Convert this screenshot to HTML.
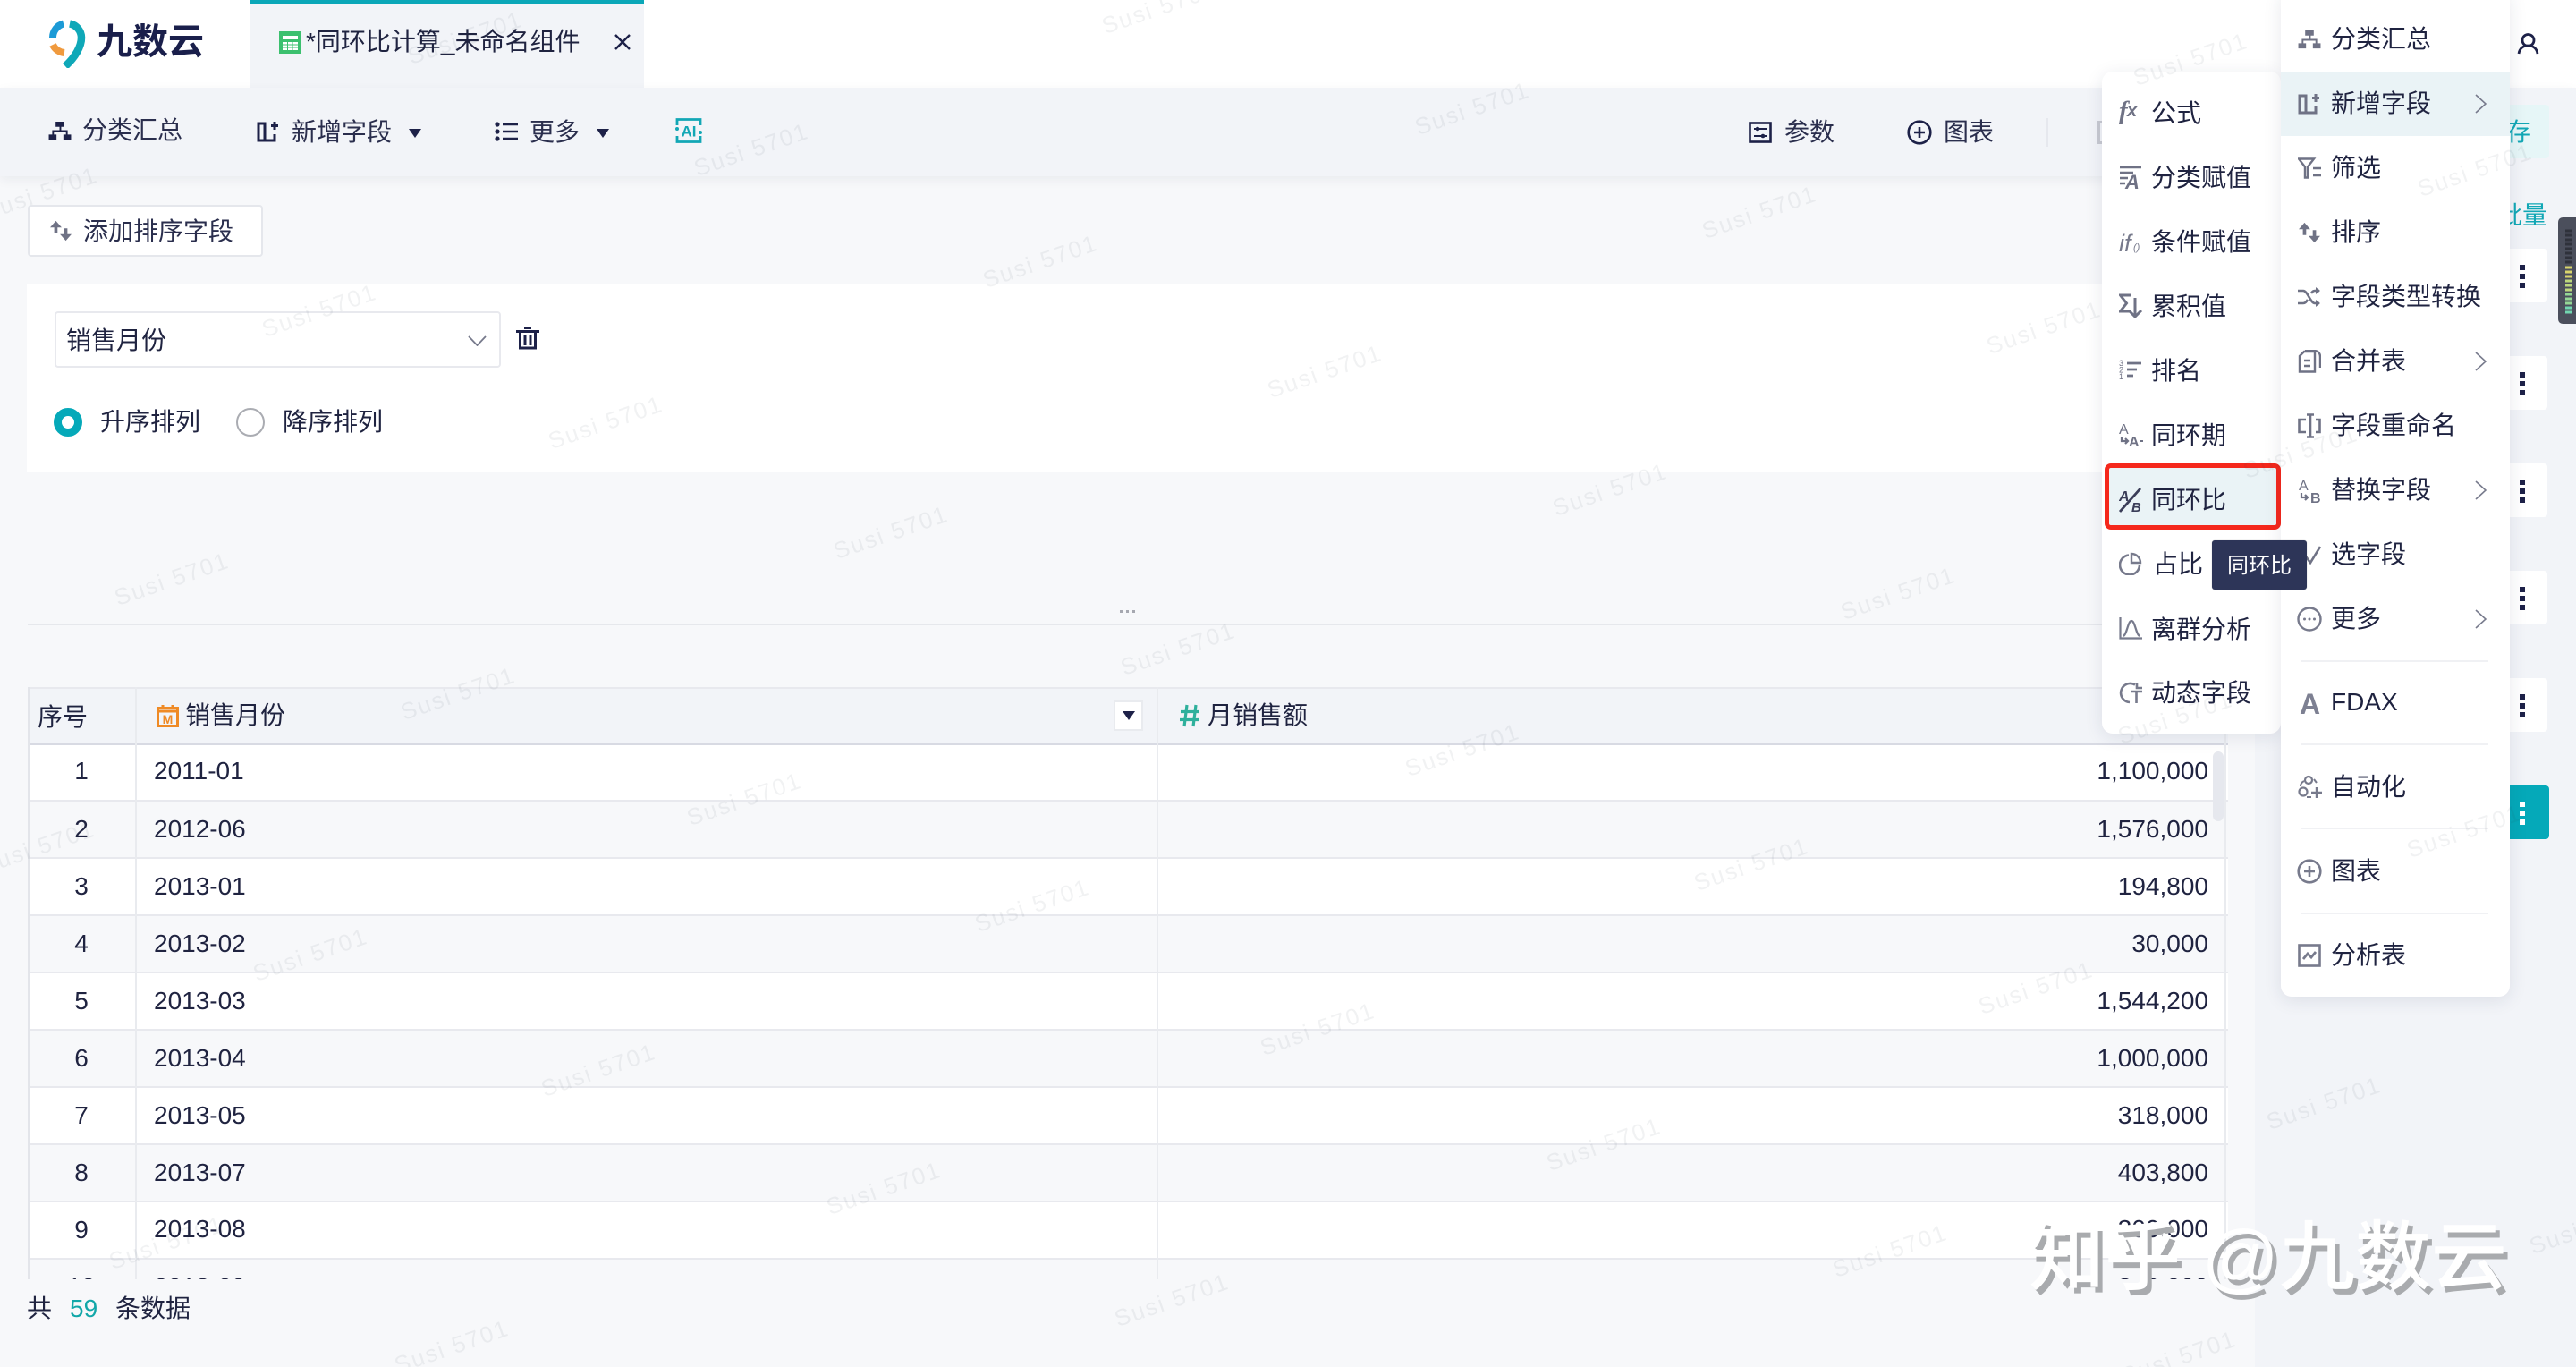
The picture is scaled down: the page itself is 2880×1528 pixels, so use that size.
<!DOCTYPE html>
<html lang="zh">
<head>
<meta charset="utf-8">
<title>九数云</title>
<style>
html,body{margin:0;padding:0;background:#f7f8fa}
#p{position:relative;width:2880px;height:1528px;overflow:hidden;background:#f7f8fa;font-family:"Liberation Sans","Noto Sans CJK SC",sans-serif;font-size:28px;color:#1f2340}
#p div,#p span,#p svg{position:absolute;display:block}
.t{line-height:40px;height:40px;white-space:nowrap;margin-top:1px}
.r .t{margin-top:0}
.r{background:#fff;height:62px;left:0;width:2460px;border-bottom:2px solid #e8e9ee}
.r.a{background:#f7f8fa}
.n{width:120px;left:0;text-align:center;top:11px}
.d{left:141px;top:11px}
.m{right:22px;top:11px}
svg{fill:none;stroke-width:2.5}
.w{font-size:26px;letter-spacing:2px;line-height:30px;color:rgba(50,55,80,.065);white-space:nowrap;width:140px;height:30px;text-align:center;margin:-15px 0 0 -70px;transform:rotate(-19deg)}
.dots b{position:absolute;left:0;width:6px;height:6px;background:#1d2148}
.sep{height:2px;background:#f0f1f4;left:2573px;width:209px}
</style>
</head>
<body>
<div id="p">

<svg width="0" height="0" style="position:absolute">
<defs>
<symbol id="hier" viewBox="0 0 26 24"><path fill="currentColor" stroke="none" d="M8 1h10v6h-3.500v4H22v5h4v6h-9v-6h3v-3H6v3h3v6H0v-6h4v-5h8.500V7H8z"/></symbol>
<symbol id="fplus" viewBox="0 0 26 24"><path d="M2 3h7v19H2zM9 22h11v-7M20 1v9M16 5.500h8" stroke="currentColor" stroke-width="3" fill="none"/></symbol>
<symbol id="cplus" viewBox="0 0 28 28"><circle cx="14" cy="14" r="12.300" stroke="currentColor" stroke-width="2.600" fill="none"/><path d="M14 8v12M8 14h12" stroke="currentColor" stroke-width="2.600" fill="none"/></symbol>
<symbol id="sort" viewBox="0 0 26 26"><path fill="currentColor" stroke="none" d="M7 1l7 8H9v7H5V9H0zM19 25l-7-8h5v-7h4v7h5z"/></symbol>
<symbol id="chev" viewBox="0 0 13 22"><path d="M1 1l11 10L1 21" stroke="#777a8c" stroke-width="1.600" fill="none"/></symbol>
</defs>
</svg>

<!-- top header -->
<div style="left:0;top:0;width:2880px;height:98px;background:#fff"></div>
<svg style="left:54px;top:22px" width="42" height="54" viewBox="0 0 42 54">
<path d="M5 20A16 16 0 0 1 17 4.500" stroke="#1c9ad6" stroke-width="8"/>
<path d="M5 28A16 16 0 0 0 18 37" stroke="#f09a3e" stroke-width="8"/>
<path d="M24 4.500A16 16 0 0 1 37 20C37 30 30 42 19 52" stroke="#0fa8b8" stroke-width="8.500"/>
</svg>
<span class="t" style="left:108px;top:26px;font-size:40px;line-height:40px;font-weight:700;color:#1a1f4b">九数云</span>

<div style="left:280px;top:0;width:440px;height:98px;background:#f2f4f8"></div>
<div style="left:280px;top:0;width:440px;height:4px;background:#0aa7b8"></div>
<svg style="left:312px;top:35px" width="25" height="25" viewBox="0 0 25 25">
<rect width="25" height="25" fill="#3cc06f" stroke="none"/>
<rect x="4" y="5" width="17" height="4" fill="#fff" stroke="none"/>
<path d="M4 12h17v9H4z" fill="#fff" stroke="none"/>
<path d="M4 15h17M4 18h17M9.500 12v9M15 12v9" stroke="#3cc06f" stroke-width="1"/>
</svg>
<span class="t" style="left:342px;top:26px">*同环比计算_未命名组件</span>
<svg style="left:687px;top:38px" width="18" height="18" viewBox="0 0 18 18"><path d="M1 1l16 16M17 1L1 17" stroke="#1d2148" stroke-width="2.400"/></svg>

<svg style="left:2814px;top:37px" width="25" height="24" viewBox="0 0 25 24"><circle cx="12.500" cy="8" r="6.500" stroke="#1d2148" stroke-width="2.800"/><path d="M2 23c1-6 5-9 10.500-9S22 17 23 23" stroke="#1d2148" stroke-width="2.800"/></svg>

<!-- toolbar -->
<div style="left:0;top:98px;width:2880px;height:99px;background:#f2f4f8;box-shadow:0 4px 12px rgba(20,30,60,.06)"></div>
<svg style="left:54px;top:135px;color:#1d2148" width="26" height="23"><use href="#hier"/></svg>
<span class="t" style="left:92px;top:125px;color:#2a2e4d">分类汇总</span>
<svg style="left:287px;top:135px;color:#1d2148" width="26" height="24"><use href="#fplus"/></svg>
<span class="t" style="left:326px;top:127px;color:#2a2e4d">新增字段</span>
<svg style="left:457px;top:144px" width="14" height="10" viewBox="0 0 14 10"><path d="M0 0h14L7 10z" fill="#1d2148" stroke="none"/></svg>
<svg style="left:553px;top:136px" width="26" height="22" viewBox="0 0 26 22"><path d="M9 3h17M9 11h17M9 19h17" stroke="#1d2148" stroke-width="2.600"/><circle cx="3" cy="3" r="2.600" fill="#1d2148" stroke="none"/><circle cx="3" cy="11" r="2.600" fill="#1d2148" stroke="none"/><circle cx="3" cy="19" r="2.600" fill="#1d2148" stroke="none"/></svg>
<span class="t" style="left:592px;top:127px;color:#2a2e4d">更多</span>
<svg style="left:667px;top:144px" width="14" height="10" viewBox="0 0 14 10"><path d="M0 0h14L7 10z" fill="#1d2148" stroke="none"/></svg>
<svg style="left:755px;top:132px" width="30" height="28" viewBox="0 0 30 28">
<path d="M2 8V1.500h26V8M2 20v6.500h26V20" stroke="#12a7b5" stroke-width="2.800"/>
<circle cx="2" cy="12" r="2" fill="#12a7b5" stroke="none"/><circle cx="28" cy="16" r="2" fill="#12a7b5" stroke="none"/>
<text x="15" y="20.500" text-anchor="middle" font-family="Liberation Sans" font-weight="700" font-size="17" fill="#12a7b5" stroke="none">AI</text>
</svg>

<svg style="left:1955px;top:136px" width="26" height="24" viewBox="0 0 26 24"><rect x="1.500" y="1.500" width="23" height="21" stroke="#1d2148" stroke-width="2.600"/><path d="M6 8h14M6 16h14" stroke="#1d2148" stroke-width="2"/><circle cx="10" cy="8" r="2.300" fill="#1d2148" stroke="none"/><circle cx="16" cy="16" r="2.300" fill="#1d2148" stroke="none"/></svg>
<span class="t" style="left:1995px;top:127px;color:#2a2e4d">参数</span>
<svg style="left:2132px;top:134px;color:#1d2148" width="28" height="28"><use href="#cplus"/></svg>
<span class="t" style="left:2173px;top:127px;color:#2a2e4d">图表</span>
<div style="left:2288px;top:132px;width:2px;height:32px;background:#e6e8ee"></div>
<div style="left:2345px;top:135px;width:12px;height:26px;border:3px solid #c8cad2;box-sizing:border-box"></div>

<!-- right panel -->
<div style="left:2521px;top:197px;width:359px;height:1331px;background:#f2f4f8"></div>
<div style="left:2700px;top:117px;width:150px;height:60px;background:#e6f6f7;border-radius:4px"></div>
<span class="t" style="left:2774px;top:127px;color:#12a7b5;font-size:28px;width:56px">保存</span>
<span class="t" style="left:2792px;top:220px;color:#12a7b5">批量</span>
<div style="left:2640px;top:278px;width:208px;height:60px;background:#fff;border-radius:4px"></div>
<div style="left:2640px;top:398px;width:208px;height:60px;background:#fff;border-radius:4px"></div>
<div style="left:2640px;top:518px;width:208px;height:60px;background:#fff;border-radius:4px"></div>
<div style="left:2640px;top:638px;width:208px;height:60px;background:#fff;border-radius:4px"></div>
<div style="left:2640px;top:758px;width:208px;height:60px;background:#fff;border-radius:4px"></div>
<div style="left:2640px;top:878px;width:210px;height:60px;background:#05a9b9;border-radius:4px"></div>
<div class="dots" style="left:2817px;top:296px;width:6px;height:26px"><b style="top:0"></b><b style="top:10px"></b><b style="top:20px"></b></div>
<div class="dots" style="left:2817px;top:416px;width:6px;height:26px"><b style="top:0"></b><b style="top:10px"></b><b style="top:20px"></b></div>
<div class="dots" style="left:2817px;top:536px;width:6px;height:26px"><b style="top:0"></b><b style="top:10px"></b><b style="top:20px"></b></div>
<div class="dots" style="left:2817px;top:656px;width:6px;height:26px"><b style="top:0"></b><b style="top:10px"></b><b style="top:20px"></b></div>
<div class="dots" style="left:2817px;top:776px;width:6px;height:26px"><b style="top:0"></b><b style="top:10px"></b><b style="top:20px"></b></div>
<div class="dots" style="left:2817px;top:896px;width:6px;height:26px"><b style="top:0;background:#fff"></b><b style="top:10px;background:#fff"></b><b style="top:20px;background:#fff"></b></div>

<!-- side widget -->
<svg style="left:2860px;top:243px" width="20" height="119" viewBox="0 0 20 119">
<path d="M20 0H6Q0 0 0 6v107q0 6 6 6h14z" fill="#4b4f5c" stroke="none"/>
<path d="M8 15h8M8 20h8M8 25h8M8 30h8M8 35h8M8 40h8M8 45h8M8 50h8" stroke="#2f323b" stroke-width="3"/>
<path d="M8 56h8M8 61h8M8 66h8" stroke="#d9d56c" stroke-width="3"/>
<path d="M8 71h8M8 76h8M8 81h8" stroke="#bcd77c" stroke-width="3"/>
<path d="M8 86h8M8 91h8M8 96h8" stroke="#94d795" stroke-width="3"/>
<path d="M8 101h8M8 106h8" stroke="#72d6b0" stroke-width="3"/>
</svg>

<!-- sort button -->
<div style="left:31px;top:229px;width:263px;height:58px;box-sizing:border-box;background:#fff;border:2px solid #e5e7ec;border-radius:4px"></div>
<svg style="left:56px;top:246px;color:#6f7285" width="24" height="24"><use href="#sort"/></svg>
<span class="t" style="left:93px;top:238px;color:#2a2e4d">添加排序字段</span>

<!-- sort panel -->
<div style="left:30px;top:317px;width:2491px;height:211px;background:#fff"></div>
<div style="left:61px;top:348px;width:499px;height:63px;box-sizing:border-box;border:2px solid #e8e9ee;border-radius:4px;background:#fff"></div>
<span class="t" style="left:74px;top:360px">销售月份</span>
<svg style="left:523px;top:375px" width="21" height="12" viewBox="0 0 21 12"><path d="M1 1l9.500 10L20 1" stroke="#777a8c" stroke-width="1.800"/></svg>
<svg style="left:577px;top:365px" width="26" height="26" viewBox="0 0 26 26"><path d="M0 5.500h26M9 1.500h8" stroke="#1d2148" stroke-width="3"/><path d="M4.500 7v17h17V7M10 10v11M16 10v11" stroke="#1d2148" stroke-width="3"/></svg>
<div style="left:60px;top:456px;width:32px;height:32px;box-sizing:border-box;border:9px solid #05a9b9;border-radius:50%;background:#fff"></div>
<span class="t" style="left:112px;top:451px">升序排列</span>
<div style="left:264px;top:456px;width:32px;height:32px;box-sizing:border-box;border:2px solid #aaacb2;border-radius:50%;background:#fff"></div>
<span class="t" style="left:316px;top:451px">降序排列</span>

<!-- separator -->
<div style="left:31px;top:697px;width:2490px;height:2px;background:#e6e8ec"></div>
<span style="left:1252px;top:682px;width:3px;height:3px;background:#a6a8b0"></span>
<span style="left:1259px;top:682px;width:3px;height:3px;background:#a6a8b0"></span>
<span style="left:1266px;top:682px;width:3px;height:3px;background:#a6a8b0"></span>

<!-- table -->
<div style="left:31px;top:768px;width:2460px;height:662px;overflow:hidden;background:#f2f4f8">
  <div style="left:0;top:0;width:2460px;height:2px;background:#e8e9ee"></div>
  <span class="t" style="left:11px;top:13px">序号</span>
  <svg style="left:144px;top:20px" width="25" height="25" viewBox="0 0 25 25"><rect x="1.500" y="3.500" width="22" height="20" stroke="#ef8a25" stroke-width="3"/><path d="M1.500 7h22M7 0v4M18 0v4" stroke="#ef8a25" stroke-width="3"/><text x="12.500" y="21" text-anchor="middle" font-family="Liberation Sans" font-size="14" font-weight="700" fill="#ef8a25" stroke="none">M</text></svg>
  <span class="t" style="left:176px;top:11px">销售月份</span>
  <div style="left:1214px;top:15px;width:33px;height:34px;box-sizing:border-box;background:#fff;border:2px solid #e9ebef"></div>
  <svg style="left:1224px;top:27px" width="14" height="10" viewBox="0 0 14 10"><path d="M0 0h14L7 10z" fill="#1d2148" stroke="none"/></svg>
  <svg style="left:1288px;top:19px" width="23" height="26" viewBox="0 0 23 26"><path d="M8 1L5 25M18 1l-3 24M1 8.500h21M0 17.500h21" stroke="#2fb09c" stroke-width="3.200"/></svg>
  <span class="t" style="left:1319px;top:11px">月销售额</span>

  <div style="left:0;top:62px;width:2460px;height:3px;background:#d8dae3"></div>

  <div class="r" style="top:65px;height:61px"><span class="t n" style="top:9px">1</span><span class="t d" style="top:9px">2011-01</span><span class="t m" style="top:9px">1,100,000</span></div>
  <div class="r a" style="top:128px"><span class="t n">2</span><span class="t d">2012-06</span><span class="t m">1,576,000</span></div>
  <div class="r" style="top:192px"><span class="t n">3</span><span class="t d">2013-01</span><span class="t m">194,800</span></div>
  <div class="r a" style="top:256px"><span class="t n">4</span><span class="t d">2013-02</span><span class="t m">30,000</span></div>
  <div class="r" style="top:320px"><span class="t n">5</span><span class="t d">2013-03</span><span class="t m">1,544,200</span></div>
  <div class="r a" style="top:384px"><span class="t n">6</span><span class="t d">2013-04</span><span class="t m">1,000,000</span></div>
  <div class="r" style="top:448px"><span class="t n">7</span><span class="t d">2013-05</span><span class="t m">318,000</span></div>
  <div class="r a" style="top:512px"><span class="t n">8</span><span class="t d">2013-07</span><span class="t m">403,800</span></div>
  <div class="r" style="top:576px"><span class="t n">9</span><span class="t d" style="top:10px">2013-08</span><span class="t m" style="top:10px">300,000</span></div>
  <div class="r a" style="top:640px"><span class="t n">10</span><span class="t d">2013-09</span><span class="t m">340,000</span></div>

  <div style="left:0;top:0;width:2px;height:662px;background:#e3e5ea"></div>
  <div style="left:120px;top:0;width:2px;height:662px;background:#e9ebef"></div>
  <div style="left:1262px;top:0;width:2px;height:662px;background:#e9ebef"></div>
  <div style="left:2456px;top:0;width:2px;height:662px;background:#e9ebef"></div>
  <div style="left:2443px;top:72px;width:12px;height:78px;background:#e6e8ee;border-radius:6px"></div>
</div>

<!-- footer -->
<span class="t" style="left:30px;top:1442px">共</span>
<span class="t" style="left:78px;top:1442px;color:#12a7a8">59</span>
<span class="t" style="left:129px;top:1442px">条数据</span>

<!-- submenu -->
<div style="left:2350px;top:80px;width:200px;height:740px;background:#fff;border-radius:12px;box-shadow:0 4px 20px rgba(30,40,80,.10)"></div>
<div style="left:2353px;top:518px;width:197px;height:74px;box-sizing:border-box;background:#eaf3f6;border:5px solid #f5281c;border-radius:7px"></div>

<svg style="left:2369px;top:110px" width="28" height="30" viewBox="0 0 28 30"><text x="0" y="23" font-family="Liberation Serif" font-style="italic" font-weight="700" font-size="29" fill="#6f7285" stroke="none">f</text><text x="9" y="20" font-family="Liberation Sans" font-style="italic" font-weight="700" font-size="20" fill="#6f7285" stroke="none">x</text></svg>
<span class="t" style="left:2405px;top:106px">公式</span>
<svg style="left:2369px;top:185px" width="26" height="27" viewBox="0 0 26 27"><path d="M1 2h24M1 8h15M1 14h9M1 20h6" stroke="#6f7285" stroke-width="2.600"/><text x="7" y="26" font-family="Liberation Sans" font-style="italic" font-weight="700" font-size="22" fill="#6f7285" stroke="none">A</text></svg>
<span class="t" style="left:2405px;top:178px">分类赋值</span>
<svg style="left:2369px;top:256px" width="27" height="28" viewBox="0 0 27 28"><text x="0" y="25" font-family="Liberation Sans" font-style="italic" font-size="27" fill="#777a8c" stroke="none">if</text><text x="16" y="24" font-family="Liberation Sans" font-style="italic" font-size="11" fill="#777a8c" stroke="none">()</text></svg>
<span class="t" style="left:2405px;top:250px">条件赋值</span>
<svg style="left:2369px;top:328px" width="26" height="28" viewBox="0 0 26 28"><path d="M14 2H1.500l7 9-7 9h10" stroke="#6f7285" stroke-width="3"/><path d="M18 5v20M11 19l7 7 7-7" stroke="#6f7285" stroke-width="3"/></svg>
<span class="t" style="left:2405px;top:322px">累积值</span>
<svg style="left:2369px;top:401px" width="26" height="24" viewBox="0 0 26 24"><path d="M9 5h16M9 12h11M9 19h7" stroke="#6f7285" stroke-width="2.800"/><text x="0" y="8" font-family="Liberation Sans" font-size="9" fill="#6f7285" stroke="none">3</text><text x="0" y="15.500" font-family="Liberation Sans" font-size="9" fill="#6f7285" stroke="none">2</text><text x="0" y="23" font-family="Liberation Sans" font-size="9" fill="#6f7285" stroke="none">1</text></svg>
<span class="t" style="left:2405px;top:394px">排名</span>
<svg style="left:2369px;top:472px" width="27" height="28" viewBox="0 0 27 28"><text x="0" y="13" font-family="Liberation Sans" font-size="16" fill="#6f7285" stroke="none">A</text><path d="M3 16v5h7M7 18l3 3-3 3" stroke="#6f7285" stroke-width="2.200"/><text x="11" y="27" font-family="Liberation Sans" font-weight="700" font-size="16" fill="#6f7285" stroke="none">A</text><path d="M23 21h4" stroke="#6f7285" stroke-width="2"/></svg>
<span class="t" style="left:2405px;top:466px">同环期</span>
<svg style="left:2369px;top:545px" width="26" height="28" viewBox="0 0 26 28"><path d="M1 27L24 1" stroke="#3a3d58" stroke-width="2.800"/><text x="0" y="15" font-family="Liberation Sans" font-style="italic" font-weight="700" font-size="16" fill="#3a3d58" stroke="none">A</text><text x="14" y="27" font-family="Liberation Sans" font-style="italic" font-weight="700" font-size="15" fill="#3a3d58" stroke="none">B</text></svg>
<span class="t" style="left:2405px;top:538px">同环比</span>
<svg style="left:2369px;top:617px" width="26" height="26" viewBox="0 0 26 26"><path d="M11 3.500A11 11 0 1 0 23 15" stroke="#777a8c" stroke-width="2.600"/><path d="M14 2a10 10 0 0 1 10 10H14z" stroke="#777a8c" stroke-width="2.400"/></svg>
<span class="t" style="left:2407px;top:610px">占比</span>
<svg style="left:2369px;top:690px" width="26" height="25" viewBox="0 0 26 25"><path d="M1.500 0v23.500H26" stroke="#777a8c" stroke-width="2.200"/><path d="M5 21c4-2 5-17 9-17s5 15 9 17" stroke="#777a8c" stroke-width="2.200"/></svg>
<span class="t" style="left:2405px;top:683px">离群分析</span>
<svg style="left:2369px;top:762px" width="26" height="25" viewBox="0 0 26 25"><path d="M18 3.500A10.500 10.500 0 1 0 12 23" stroke="#777a8c" stroke-width="2.600"/><path d="M13 11h13M19.500 11v13M20 1v6h6" stroke="#777a8c" stroke-width="2.600"/></svg>
<span class="t" style="left:2405px;top:754px">动态字段</span>

<!-- main menu -->
<div style="left:2550px;top:-12px;width:256px;height:1126px;background:#fff;border-radius:12px;box-shadow:0 4px 20px rgba(30,40,80,.10)"></div>
<div style="left:2550px;top:80px;width:256px;height:72px;background:#eaf3f6"></div>

<svg style="left:2569px;top:33px;color:#6f7285" width="26" height="23"><use href="#hier"/></svg>
<span class="t" style="left:2606px;top:23px">分类汇总</span>
<svg style="left:2569px;top:104px;color:#6f7285" width="26" height="24"><use href="#fplus"/></svg>
<span class="t" style="left:2606px;top:95px">新增字段</span>
<svg style="left:2767px;top:105px" width="13" height="22"><use href="#chev"/></svg>
<svg style="left:2569px;top:176px" width="26" height="24" viewBox="0 0 26 24"><path d="M1 1.500h17l-7 9v12H8v-12z" stroke="#6f7285" stroke-width="2.400"/><path d="M17 12h9M17 20h9" stroke="#6f7285" stroke-width="2.400"/></svg>
<span class="t" style="left:2606px;top:167px">筛选</span>
<svg style="left:2570px;top:248px;color:#6f7285" width="24" height="24"><use href="#sort"/></svg>
<span class="t" style="left:2606px;top:239px">排序</span>
<svg style="left:2569px;top:320px" width="26" height="24" viewBox="0 0 26 24"><path d="M0 5h6c5 0 8 14 13 14h5M0 19h6c2 0 3-1 5-4M15 8c1-2 2-3 4-3h5" stroke="#6f7285" stroke-width="2.600"/><path d="M20 1l5 4-5 4zM20 15l5 4-5 4z" fill="#6f7285" stroke="none"/></svg>
<span class="t" style="left:2606px;top:311px">字段类型转换</span>
<svg style="left:2569px;top:391px" width="26" height="26" viewBox="0 0 26 26"><path d="M2 24.500V7l5-5h12v22.500zM7 12h7M7 18h7" stroke="#6f7285" stroke-width="2.400"/><path d="M8 1h10c5 0 7 3 7 7v12" stroke="#6f7285" stroke-width="2.400"/></svg>
<span class="t" style="left:2606px;top:383px">合并表</span>
<svg style="left:2767px;top:393px" width="13" height="22"><use href="#chev"/></svg>
<svg style="left:2569px;top:462px" width="26" height="28" viewBox="0 0 26 28"><path d="M9 7H1.500v14H9M20 7h4.500v14H20M10 1.500h8M10 26.500h8M14 1.500v25" stroke="#6f7285" stroke-width="2.600"/></svg>
<span class="t" style="left:2606px;top:455px">字段重命名</span>
<svg style="left:2569px;top:535px" width="27" height="28" viewBox="0 0 27 28"><text x="1" y="13" font-family="Liberation Sans" font-size="16" fill="#6f7285" stroke="none">A</text><path d="M4 16v5h7M8 18l3 3-3 3" stroke="#6f7285" stroke-width="2.200"/><text x="14" y="27" font-family="Liberation Sans" font-weight="700" font-size="16" fill="#6f7285" stroke="none">B</text></svg>
<span class="t" style="left:2606px;top:527px">替换字段</span>
<svg style="left:2767px;top:537px" width="13" height="22"><use href="#chev"/></svg>
<svg style="left:2569px;top:608px" width="26" height="24" viewBox="0 0 26 24"><path d="M0 4h10M0 10h8M0 16h6" stroke="#6f7285" stroke-width="2.400"/><path d="M9 14l5 7L25 3" stroke="#6f7285" stroke-width="2.600"/></svg>
<span class="t" style="left:2606px;top:599px">选字段</span>
<svg style="left:2568px;top:678px" width="28" height="28" viewBox="0 0 28 28"><circle cx="14" cy="14" r="12.500" stroke="#777a8c" stroke-width="2.400"/><circle cx="8.500" cy="14" r="1.500" fill="#777a8c" stroke="none"/><circle cx="14" cy="14" r="1.500" fill="#777a8c" stroke="none"/><circle cx="19.500" cy="14" r="1.500" fill="#777a8c" stroke="none"/></svg>
<span class="t" style="left:2606px;top:671px">更多</span>
<svg style="left:2767px;top:681px" width="13" height="22"><use href="#chev"/></svg>
<div class="sep" style="top:738px"></div>
<span class="t" style="left:2571px;top:766px;font-size:32px;font-weight:700;color:#7d8092">A</span>
<span class="t" style="left:2606px;top:764px">FDAX</span>
<div class="sep" style="top:831px"></div>
<svg style="left:2568px;top:866px" width="28" height="28" viewBox="0 0 28 28"><circle cx="13" cy="6" r="4" stroke="#777a8c" stroke-width="2.200"/><circle cx="7" cy="19" r="4.500" stroke="#777a8c" stroke-width="2.200"/><path d="M22 14v12M16 20h12" stroke="#777a8c" stroke-width="2.400"/><path d="M4 13c0-3 2-5 4-6M19 5l3 4M11 25h5" stroke="#777a8c" stroke-width="2"/></svg>
<span class="t" style="left:2606px;top:859px">自动化</span>
<div class="sep" style="top:925px"></div>
<svg style="left:2568px;top:960px;color:#777a8c" width="28" height="28"><use href="#cplus"/></svg>
<span class="t" style="left:2606px;top:953px">图表</span>
<div class="sep" style="top:1020px"></div>
<svg style="left:2569px;top:1055px" width="26" height="26" viewBox="0 0 26 26"><rect x="1.500" y="1.500" width="23" height="23" stroke="#777a8c" stroke-width="2.600"/><path d="M6 17l5-6 4 4 5-6" stroke="#777a8c" stroke-width="2.800"/></svg>
<span class="t" style="left:2606px;top:1047px">分析表</span>

<!-- tooltip -->
<div style="left:2473px;top:604px;width:106px;height:55px;background:#2d3558;border-radius:3px;box-shadow:0 0 1px rgba(0,0,0,.3)"></div>
<span class="t" style="left:2490px;top:612px;font-size:24px;color:#fff">同环比</span>

<!-- watermarks -->
<span class="w" style="left:1296px;top:8px">Susi 5701</span>
<span class="w" style="left:2449px;top:66px">Susi 5701</span>
<span class="w" style="left:1646px;top:121px">Susi 5701</span>
<span class="w" style="left:840px;top:167px">Susi 5701</span>
<span class="w" style="left:520px;top:42px">Susi 5701</span>
<span class="w" style="left:45px;top:216px">Susi 5701</span>
<span class="w" style="left:1967px;top:237px">Susi 5701</span>
<span class="w" style="left:2767px;top:190px">Susi 5701</span>
<span class="w" style="left:1163px;top:292px">Susi 5701</span>
<span class="w" style="left:357px;top:347px">Susi 5701</span>
<span class="w" style="left:2285px;top:366px">Susi 5701</span>
<span class="w" style="left:1481px;top:415px">Susi 5701</span>
<span class="w" style="left:677px;top:472px">Susi 5701</span>
<span class="w" style="left:2572px;top:505px">Susi 5701</span>
<span class="w" style="left:1800px;top:547px">Susi 5701</span>
<span class="w" style="left:996px;top:595px">Susi 5701</span>
<span class="w" style="left:192px;top:647px">Susi 5701</span>
<span class="w" style="left:2122px;top:663px">Susi 5701</span>
<span class="w" style="left:1317px;top:725px">Susi 5701</span>
<span class="w" style="left:512px;top:775px">Susi 5701</span>
<span class="w" style="left:2432px;top:802px">Susi 5701</span>
<span class="w" style="left:1635px;top:838px">Susi 5701</span>
<span class="w" style="left:832px;top:893px">Susi 5701</span>
<span class="w" style="left:42px;top:947px">Susi 5701</span>
<span class="w" style="left:2755px;top:929px">Susi 5701</span>
<span class="w" style="left:1958px;top:966px">Susi 5701</span>
<span class="w" style="left:1154px;top:1012px">Susi 5701</span>
<span class="w" style="left:347px;top:1067px">Susi 5701</span>
<span class="w" style="left:2276px;top:1104px">Susi 5701</span>
<span class="w" style="left:1473px;top:1150px">Susi 5701</span>
<span class="w" style="left:669px;top:1196px">Susi 5701</span>
<span class="w" style="left:2598px;top:1233px">Susi 5701</span>
<span class="w" style="left:1793px;top:1279px">Susi 5701</span>
<span class="w" style="left:988px;top:1328px">Susi 5701</span>
<span class="w" style="left:186px;top:1389px">Susi 5701</span>
<span class="w" style="left:2113px;top:1398px">Susi 5701</span>
<span class="w" style="left:1310px;top:1453px">Susi 5701</span>
<span class="w" style="left:505px;top:1505px">Susi 5701</span>
<span class="w" style="left:2436px;top:1517px">Susi 5701</span>
<span class="w" style="left:2892px;top:1372px">Susi 5701</span>

<!-- zhihu mark -->
<span style="left:2268px;top:1352px;font-size:85px;line-height:110px;white-space:nowrap;color:#fff;font-weight:500;text-shadow:5px 6px 0 #a9abae">知乎 @九数云</span>

</div>
</body>
</html>
